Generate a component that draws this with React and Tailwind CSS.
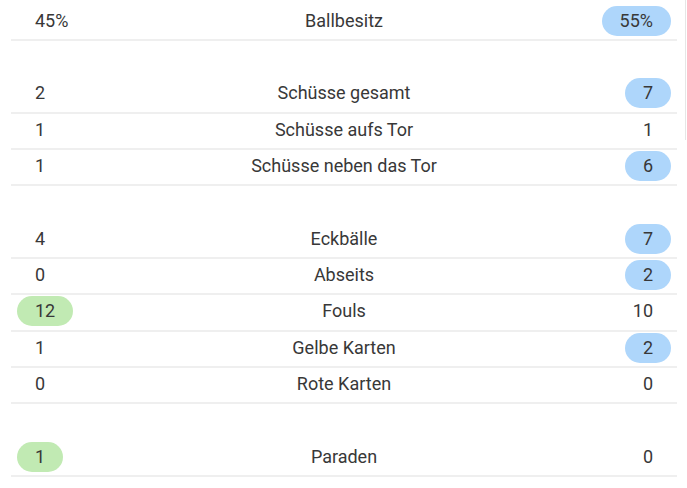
import React from "react";

const groups = [
  [{ home: "45%", label: "Ballbesitz", away: "55%", lead: "away" }],
  [
    { home: "2", label: "Schüsse gesamt", away: "7", lead: "away" },
    { home: "1", label: "Schüsse aufs Tor", away: "1" },
    { home: "1", label: "Schüsse neben das Tor", away: "6", lead: "away" },
  ],
  [
    { home: "4", label: "Eckbälle", away: "7", lead: "away" },
    { home: "0", label: "Abseits", away: "2", lead: "away" },
    { home: "12", label: "Fouls", away: "10", lead: "home" },
    { home: "1", label: "Gelbe Karten", away: "2", lead: "away" },
    { home: "0", label: "Rote Karten", away: "0" },
  ],
  [{ home: "1", label: "Paraden", away: "0", lead: "home" }],
];

const Value = ({ value, highlight, color }) => (
  <span
    className={`h-[30px] px-[18px] flex items-center rounded-full ${
      highlight ? (color === "green" ? "bg-[#c1eab3]" : "bg-[#aed6fb]") : ""
    }`}
  >
    {value}
  </span>
);

const StatRow = ({ stat }) => (
  <div className="h-[36.33px] grid grid-cols-[1fr_auto_1fr] items-center px-[6px] pb-[2px] border-b-2 border-[#efefef]">
    <div className="flex justify-start">
      <Value value={stat.home} highlight={stat.lead === "home"} color="green" />
    </div>
    <div className="text-center">{stat.label}</div>
    <div className="flex justify-end">
      <Value value={stat.away} highlight={stat.lead === "away"} color="blue" />
    </div>
  </div>
);

export default function App() {
  return (
    <div
      className="relative w-[687px] h-[488px] bg-white overflow-hidden text-[18px] leading-none text-[#383838]"
      style={{ fontFamily: "Roboto, 'Liberation Sans', sans-serif" }}
    >
      <div className="absolute right-[1px] top-0 h-[140px] w-px bg-[#e6e6e6]" />
      <div className="ml-[11px] w-[666px] pt-[4.67px] flex flex-col gap-[36.33px]">
        {groups.map((group, i) => (
          <div key={i}>
            {group.map((stat) => (
              <StatRow key={stat.label} stat={stat} />
            ))}
          </div>
        ))}
      </div>
    </div>
  );
}
